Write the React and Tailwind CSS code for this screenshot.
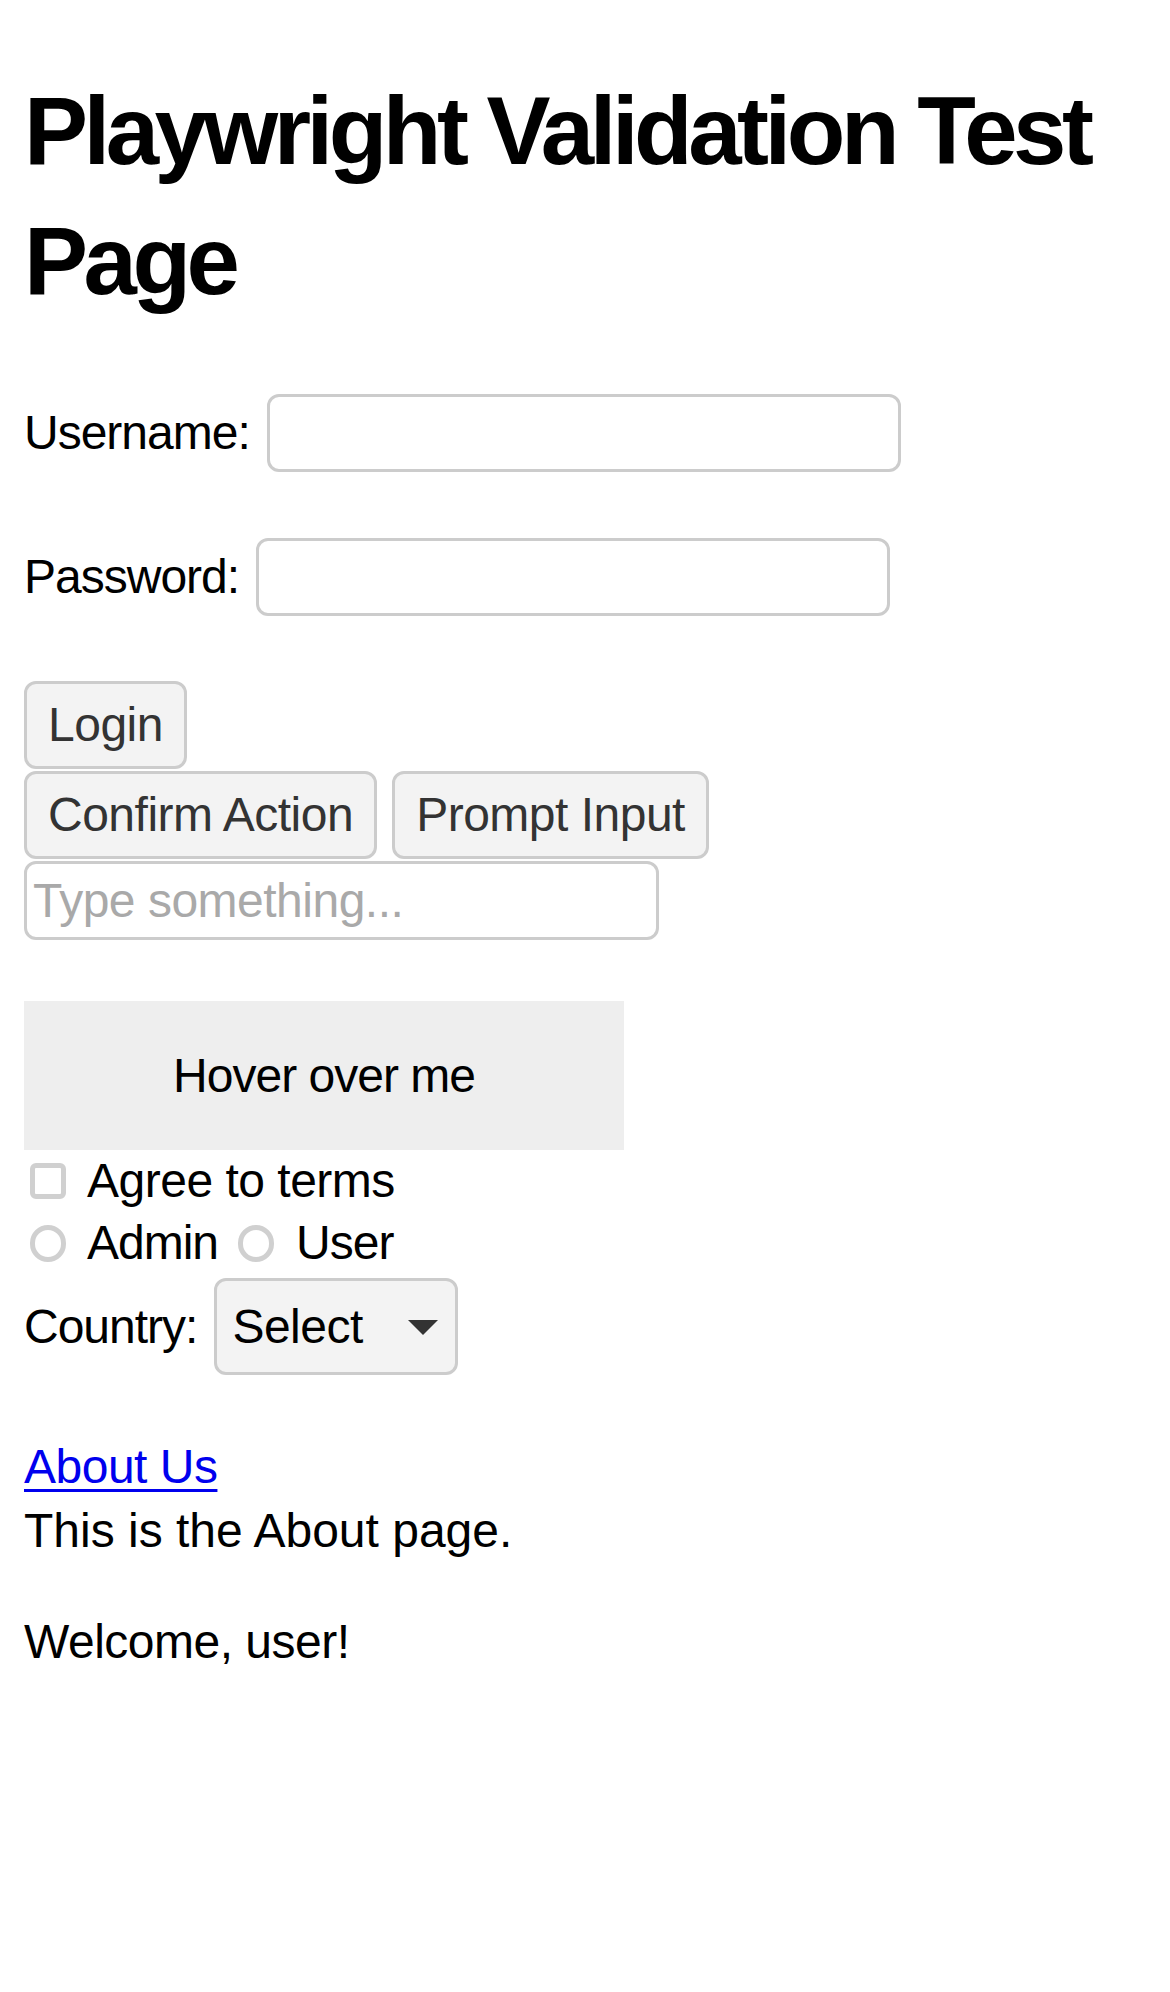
import { useState } from "react";

const App = () => {
  const [agree, setAgree] = useState(false);
  const [role, setRole] = useState("");
  const [text, setText] = useState("");

  return (
    <div
      className="min-h-screen bg-white px-[24px] pb-[200px] text-black"
      style={{ fontFamily: '"Liberation Sans", Arial, sans-serif' }}
    >
      <h1 className="mt-[66px] text-[96px] font-bold leading-[130px] tracking-[-4.5px]">
        Playwright Validation Test Page
      </h1>

      {/* login form */}
      <div className="mt-[68px] flex h-[78px] items-center gap-[17px]">
        <label className="text-[48px] tracking-[-1px]">Username:</label>
        <input
          type="text"
          className="h-[78px] w-[634px] rounded-[12px] border-[3px] border-[#cccccc] bg-white px-[6px] text-[48px] outline-none"
        />
      </div>
      <div className="mt-[66px] flex h-[78px] items-center gap-[17px]">
        <label className="text-[48px] tracking-[-1px]">Password:</label>
        <input
          type="password"
          className="h-[78px] w-[634px] rounded-[12px] border-[3px] border-[#cccccc] bg-white px-[6px] text-[48px] outline-none"
        />
      </div>

      <div className="mt-[65px]">
        <button className="h-[88px] rounded-[12px] border-[3px] border-[#cccccc] bg-[#f3f3f3] px-[21px] text-[48px] leading-[62px] tracking-[-0.5px] text-[#333333]">
          Login
        </button>
      </div>
      <div className="mt-[2px] flex gap-[15px]">
        <button className="h-[88px] rounded-[12px] border-[3px] border-[#cccccc] bg-[#f3f3f3] px-[21px] text-[48px] leading-[62px] tracking-[-0.5px] text-[#333333]">
          Confirm Action
        </button>
        <button className="h-[88px] rounded-[12px] border-[3px] border-[#cccccc] bg-[#f3f3f3] px-[21px] text-[48px] leading-[62px] tracking-[-0.5px] text-[#333333]">
          Prompt Input
        </button>
      </div>
      <div className="mt-[2px]">
        <input
          type="text"
          value={text}
          onChange={(e) => setText(e.target.value)}
          placeholder="Type something..."
          className="h-[79px] w-[635px] rounded-[12px] border-[3px] border-[#cccccc] bg-white px-[6px] text-[48px] tracking-[-0.5px] outline-none placeholder:text-[#a9a9a9]"
        />
      </div>

      <div className="mt-[61px] flex h-[149px] w-[600px] items-center justify-center bg-[#eeeeee] text-[48px] tracking-[-1px]">
        Hover over me
      </div>

      <label className="flex h-[62px] items-center text-[48px] tracking-[-0.5px]">
        <input
          type="checkbox"
          checked={agree}
          onChange={() => setAgree(!agree)}
          className="ml-[6px] mr-[21px] h-[36px] w-[36px] appearance-none rounded-[6px] border-[5px] border-[#d0d0d0] bg-white"
        />
        Agree to terms
      </label>
      <div className="flex h-[62px] items-center text-[48px] tracking-[-1px]">
        <input
          type="radio"
          name="role"
          checked={role === "admin"}
          onChange={() => setRole("admin")}
          className="ml-[6px] mr-[21px] h-[37px] w-[36px] appearance-none rounded-full border-[5px] border-[#d0d0d0] bg-white"
        />
        <span>Admin</span>
        <input
          type="radio"
          name="role"
          checked={role === "user"}
          onChange={() => setRole("user")}
          className="ml-[20px] mr-[22px] h-[37px] w-[36px] appearance-none rounded-full border-[5px] border-[#d0d0d0] bg-white"
        />
        <span>User</span>
      </div>

      <div className="mt-[4px] flex h-[97px] items-center gap-[17px]">
        <label className="text-[48px] tracking-[-1px]">Country:</label>
        <div className="relative">
          <select className="h-[97px] w-[244px] appearance-none rounded-[12px] border-[3px] border-[#cccccc] bg-[#f3f3f3] pl-[15px] text-[48px] tracking-[-0.5px] text-black outline-none">
            <option>Select</option>
            <option>India</option>
            <option>USA</option>
          </select>
          <svg
            className="pointer-events-none absolute right-[20px] top-[42px]"
            width="30"
            height="15"
            viewBox="0 0 30 15"
          >
            <path d="M0 0 L30 0 L15 15 Z" fill="#333333" />
          </svg>
        </div>
      </div>

      <div className="mt-[61px] text-[48px] leading-[62px] tracking-[-0.5px]">
        <a
          href="#about"
          className="text-[#0000ee] underline decoration-[3px] underline-offset-[6px]"
        >
          About Us
        </a>
      </div>
      <p className="mt-[2px] text-[48px] leading-[62px] tracking-[0px]">
        This is the About page.
      </p>
      <p className="mt-[49px] text-[48px] leading-[62px] tracking-[-0.5px]">
        Welcome, user!
      </p>
    </div>
  );
};

export default App;
